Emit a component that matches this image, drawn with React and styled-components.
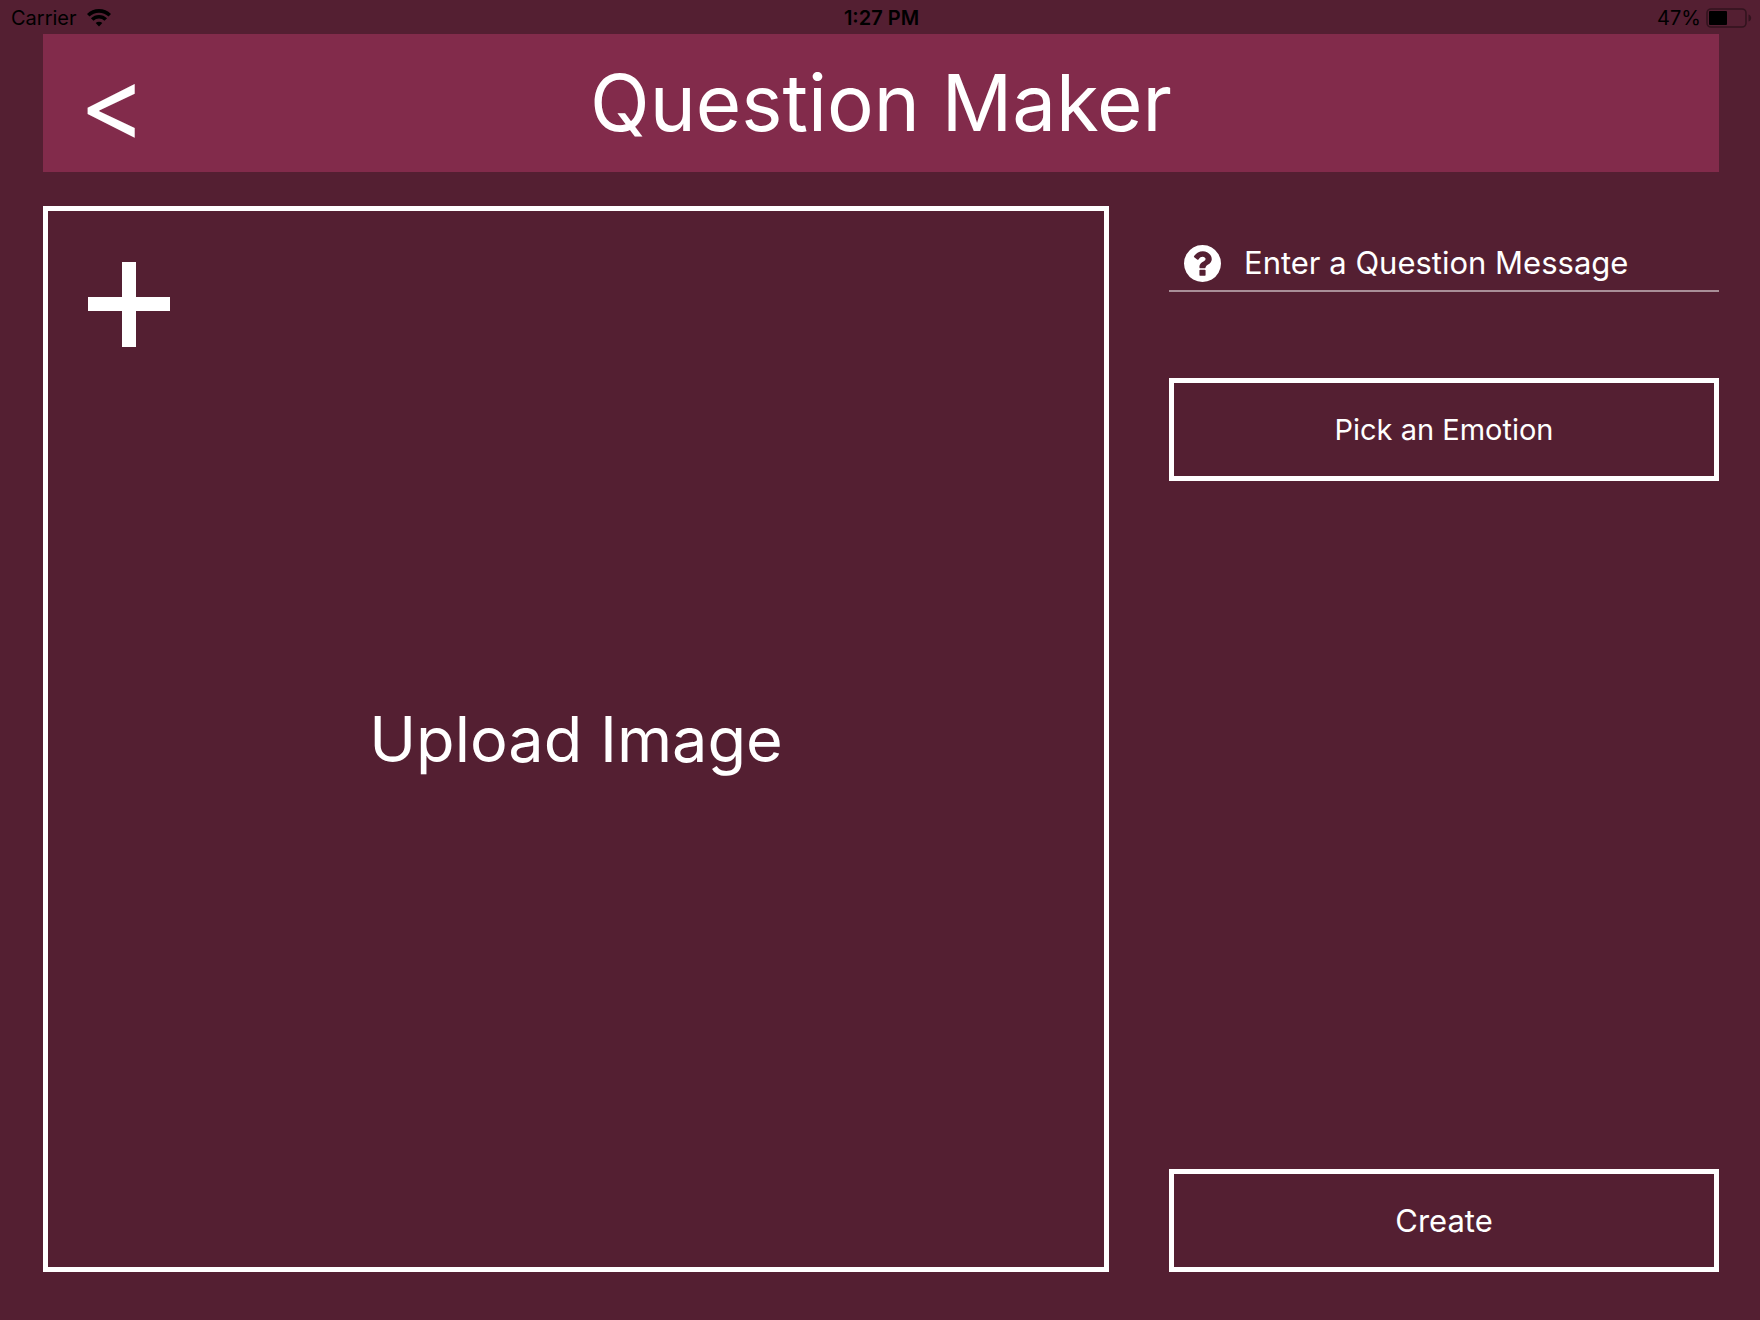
import React from "react";
import styled, { createGlobalStyle } from "styled-components";

const GlobalStyle = createGlobalStyle`
  *, *::before, *::after { box-sizing: border-box; }
  body { margin: 0; background: #541f32; }
  button, input { font: inherit; color: inherit; margin: 0; border-radius: 0; }
`;

const Screen = styled.div`
  min-height: 100vh;
  display: flex;
  flex-direction: column;
  background: #541f32;
  color: #fff;
  font-family: Inter, "Liberation Sans", sans-serif;
`;

const StatusBar = styled.div`
  display: grid;
  grid-template-columns: 1fr auto 1fr;
  align-items: center;
  height: 34px;
  padding: 2px 8px 0 11px;
  color: #000;
  font-size: 20px;
  line-height: 32px;
`;

const StatusGroup = styled.div`
  display: flex;
  align-items: center;
  justify-content: ${(p) => (p.$end ? "flex-end" : "flex-start")};
  gap: ${(p) => (p.$end ? 5 : 10)}px;
`;

const Clock = styled.time`
  font-weight: 600;
`;

const Page = styled.div`
  flex: 1;
  display: flex;
  flex-direction: column;
  gap: 34px;
  padding: 0 41px 48px 43px;
`;

const Header = styled.header`
  display: grid;
  grid-template-columns: 1fr auto 1fr;
  align-items: center;
  height: 138px;
  padding: 0 36px;
  background: #822b4b;
`;

const Title = styled.h1`
  margin: 0;
  font-size: 78px;
  font-weight: 400;
  line-height: 138px;
`;

const BackButton = styled.button`
  justify-self: start;
  padding: 0;
  border: 0;
  background: none;
  font-size: 102px;
  font-weight: 400;
  line-height: 138px;
  cursor: pointer;
`;

const Main = styled.main`
  flex: 1;
  display: grid;
  grid-template-columns: minmax(0, 1066fr) minmax(0, 550fr);
  gap: 60px;
`;

const OutlineButton = styled.button`
  border: 5px solid #fff;
  background: none;
  cursor: pointer;
`;

const UploadButton = styled(OutlineButton)`
  display: grid;
  grid-template-rows: 1fr auto 1fr;
  justify-items: center;
  padding: 40px;
`;

const PlusIcon = styled.svg`
  justify-self: start;
  align-self: start;
  width: 82px;
  height: 96px;
`;

const UploadLabel = styled.span`
  font-size: 63px;
  line-height: 80px;
`;

const Form = styled.form`
  display: flex;
  flex-direction: column;
`;

const Field = styled.label`
  display: flex;
  align-items: center;
  gap: 23px;
  height: 86px;
  margin-bottom: 86px;
  padding: 30px 0 0 15px;
  border-bottom: 2px solid #a98f98;
`;

const MessageInput = styled.input`
  flex: 1;
  min-width: 0;
  padding: 0;
  border: 0;
  outline: 0;
  background: none;
  font-size: 31px;
  line-height: 40px;
  &::placeholder { color: #fff; opacity: 1; }
`;

const ActionButton = styled(OutlineButton)`
  height: 103px;
  margin-top: ${(p) => (p.$bottom ? "auto" : 0)};
  padding: 0;
  font-size: ${(p) => p.$size}px;
  line-height: 40px;
`;

function WifiIcon() {
  return (
    <svg width="24" height="18" viewBox="0 0 24 18" fill="none" stroke="#000" strokeWidth="3.6" aria-hidden="true">
      <path d="M1.200 6.300a15.300 15.300 0 0 1 21.600 0" />
      <path d="M5.200 10.500a9.600 9.600 0 0 1 13.600 0" />
      <path d="M12 17.400 8.700 14a4.700 4.700 0 0 1 6.600 0z" fill="#000" stroke="none" />
    </svg>
  );
}

function BatteryIcon() {
  return (
    <svg width="46" height="20" viewBox="0 0 46 20" aria-hidden="true">
      <rect x="1" y="1" width="39" height="18" rx="4" fill="none" stroke="#32131e" strokeWidth="1.6" />
      <rect x="3" y="3" width="18" height="14" rx="1" fill="#000" />
      <path d="M42.500 6.500c3.600 1 3.600 6 0 7z" fill="#32131e" />
    </svg>
  );
}

function QuestionIcon() {
  return (
    <svg width="37" height="37" viewBox="0 0 1536 1536" fill="#fff" aria-hidden="true">
      <path d="M896 1248v-192q0-14-9-23t-23-9h-192q-14 0-23 9t-9 23v192q0 14 9 23t23 9h192q14 0 23-9t9-23zM1152 576q0-88-55.500-163t-138.500-116-170-41q-243 0-371 213-15 24 8 42l132 100q7 6 19 6 16 0 25-12 53-68 86-92 34-24 86-24 48 0 85.500 26t37.500 59q0 38-20 61t-68 45q-63 28-115.500 86.500t-52.500 125.500v36q0 14 9 23t23 9h192q14 0 23-9t9-23q0-19 21.500-49.500t54.500-49.500q32-18 49-28.500t46-35 44.500-48 28-60.500 12.500-81zM1536 768q0 209-103 385.500t-279.500 279.500-385.500 103-385.500-103-279.500-279.500-103-385.500 103-385.500 279.500-279.500 385.500-103 385.500 103 279.500 279.500 103 385.500z" />
    </svg>
  );
}

export default function App() {
  return (
    <Screen>
      <GlobalStyle />
      <StatusBar>
        <StatusGroup>
          <span>Carrier</span>
          <WifiIcon />
        </StatusGroup>
        <Clock>1:27 PM</Clock>
        <StatusGroup $end>
          <span>47%</span>
          <BatteryIcon />
        </StatusGroup>
      </StatusBar>
      <Page>
        <Header>
          <BackButton type="button">&lt;</BackButton>
          <Title>Question Maker</Title>
        </Header>
        <Main>
          <UploadButton type="button">
            <PlusIcon viewBox="0 0 82 96" aria-hidden="true">
              <path d="M34 11h14v35h34v14H48V96H34V60H0V46h34z" fill="#fff" />
            </PlusIcon>
            <UploadLabel>Upload Image</UploadLabel>
          </UploadButton>
          <Form onSubmit={(e) => e.preventDefault()}>
            <Field>
              <QuestionIcon />
              <MessageInput type="text" aria-label="Question message" placeholder="Enter a Question Message" />
            </Field>
            <ActionButton type="button" $size={29}>Pick an Emotion</ActionButton>
            <ActionButton type="submit" $size={31} $bottom>Create</ActionButton>
          </Form>
        </Main>
      </Page>
    </Screen>
  );
}
